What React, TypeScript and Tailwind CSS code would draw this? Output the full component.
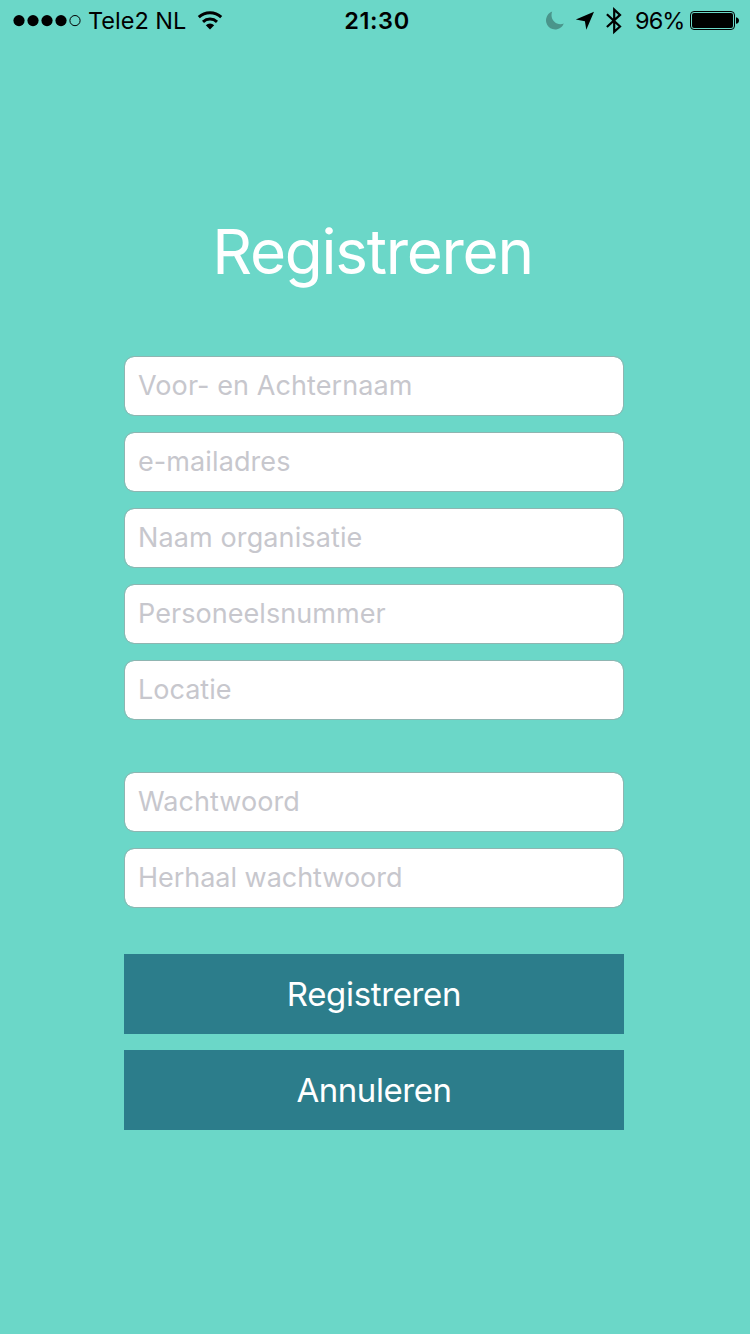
const FONT = "font-['Inter','Liberation_Sans',sans-serif]";

type FieldProps = { label: string; type?: string; spacing: string };

function Field({ label, type = "text", spacing }: FieldProps) {
  return (
    <input
      type={type}
      placeholder={label}
      aria-label={label}
      className={`block h-[60px] w-full rounded-[10px] border border-[#8fb5b1] bg-white bg-clip-padding px-[13px] pb-[2px] text-[27px] text-gray-800 outline-none placeholder:text-[#c7c7cd] placeholder:opacity-100 ${spacing}`}
    />
  );
}

function ActionButton({ label, spacing }: { label: string; spacing: string }) {
  return (
    <button
      type="button"
      className={`flex h-20 w-full items-center justify-center bg-[#2c7d8b] pt-[1px] text-[33px] text-white ${spacing}`}
    >
      {label}
    </button>
  );
}

function SignalDots() {
  return (
    <svg className="block shrink-0" width="70" height="12" viewBox="0 0 70 12">
      <circle cx="6" cy="5.6" r="5.6" />
      <circle cx="20" cy="5.6" r="5.6" />
      <circle cx="34" cy="5.6" r="5.6" />
      <circle cx="48" cy="5.6" r="5.6" />
      <circle cx="62" cy="5.6" r="5.1" fill="none" stroke="black" strokeWidth="1" />
    </svg>
  );
}

function Wifi() {
  return (
    <svg className="block shrink-0" width="26" height="20" viewBox="0 0 26 20" fill="none" stroke="black">
      <path d="M1.8 6.2A16.4 16.4 0 0 1 24.2 6.2" strokeWidth="3" />
      <path d="M6 10.8A10.4 10.4 0 0 1 20 10.8" strokeWidth="3" />
      <path d="M8.8 14.2A6.2 6.2 0 0 1 17.2 14.2L13 18.4Z" fill="black" stroke="none" />
    </svg>
  );
}

function Moon() {
  return (
    <svg className="block shrink-0" width="20" height="20" viewBox="0 0 20 20">
      <path d="M7.2 .6A9.2 9.2 0 1 0 18.8 12.6C11.5 15.2 4.2 8.6 7.2 .6Z" fill="#4a958b" />
    </svg>
  );
}

function LocationArrow() {
  return (
    <svg className="block shrink-0" width="20" height="20" viewBox="0 0 20 20">
      <path d="M19 .8L11.3 18.8L9.9 10.3L.8 8.6Z" />
    </svg>
  );
}

function Bluetooth() {
  return (
    <svg className="block shrink-0" width="18" height="28" viewBox="0 0 18 28" fill="none" stroke="black" strokeWidth="2.2">
      <path d="M1.9 7.2L15 19.5L9.2 24.7V2.6L15 7.9L1.9 20" />
    </svg>
  );
}

function Battery() {
  return (
    <svg className="block shrink-0" width="50" height="20" viewBox="0 0 50 20">
      <rect x=".5" y=".5" width="44" height="18" rx="3.5" fill="none" stroke="black" />
      <rect x="2" y="2" width="41" height="15" rx="2" />
      <path d="M46 6.2C50 6.6 50 12.4 46 12.8Z" />
    </svg>
  );
}

function StatusBar() {
  return (
    <header className="grid h-[42px] grid-cols-[1fr_66px_1fr] items-center text-[23.5px] leading-10 text-black">
      <div className="flex items-center pl-[12.5px]">
        <SignalDots />
        <span className="ml-[5.5px] w-[98px] whitespace-nowrap">Tele2 NL</span>
        <span className="ml-[11px]">
          <Wifi />
        </span>
      </div>
      <div className="flex translate-x-[2px] justify-center font-semibold tracking-[0.6px] whitespace-nowrap">21:30</div>
      <div className="flex items-center justify-end pr-[10px]">
        <Moon />
        <span className="ml-[10px]">
          <LocationArrow />
        </span>
        <span className="ml-[10px]">
          <Bluetooth />
        </span>
        <span className="ml-[12px] w-[50px] tracking-[-0.9px] whitespace-nowrap">96%</span>
        <span className="ml-[5px]">
          <Battery />
        </span>
      </div>
    </header>
  );
}

export default function App() {
  return (
    <main className={`flex min-h-[1334px] w-full flex-col bg-[#6bd7c8] ${FONT}`}>
      <StatusBar />
      <h1 className="mt-[170px] h-20 pr-[5px] text-center text-[62px] leading-20 tracking-[-1.3px] text-white">
        Registreren
      </h1>
      <form className="mt-16 ml-[124px] w-[500px]" onSubmit={(e) => e.preventDefault()}>
        <div className="flex flex-col gap-4">
          <Field label="Voor- en Achternaam" spacing="tracking-[0.08px]" />
          <Field label="e-mailadres" spacing="tracking-[0.1px]" />
          <Field label="Naam organisatie" spacing="tracking-[0.12px]" />
          <Field label="Personeelsnummer" spacing="tracking-[0.06px]" />
          <Field label="Locatie" spacing="tracking-[0px]" />
        </div>
        <div className="mt-[52px] flex flex-col gap-4">
          <Field label="Wachtwoord" type="password" spacing="tracking-[0.05px]" />
          <Field label="Herhaal wachtwoord" type="password" spacing="tracking-[-0.03px]" />
        </div>
        <div className="mt-[46px] flex flex-col gap-4">
          <ActionButton label="Registreren" spacing="tracking-[-0.35px]" />
          <ActionButton label="Annuleren" spacing="tracking-[-0.45px]" />
        </div>
      </form>
    </main>
  );
}
